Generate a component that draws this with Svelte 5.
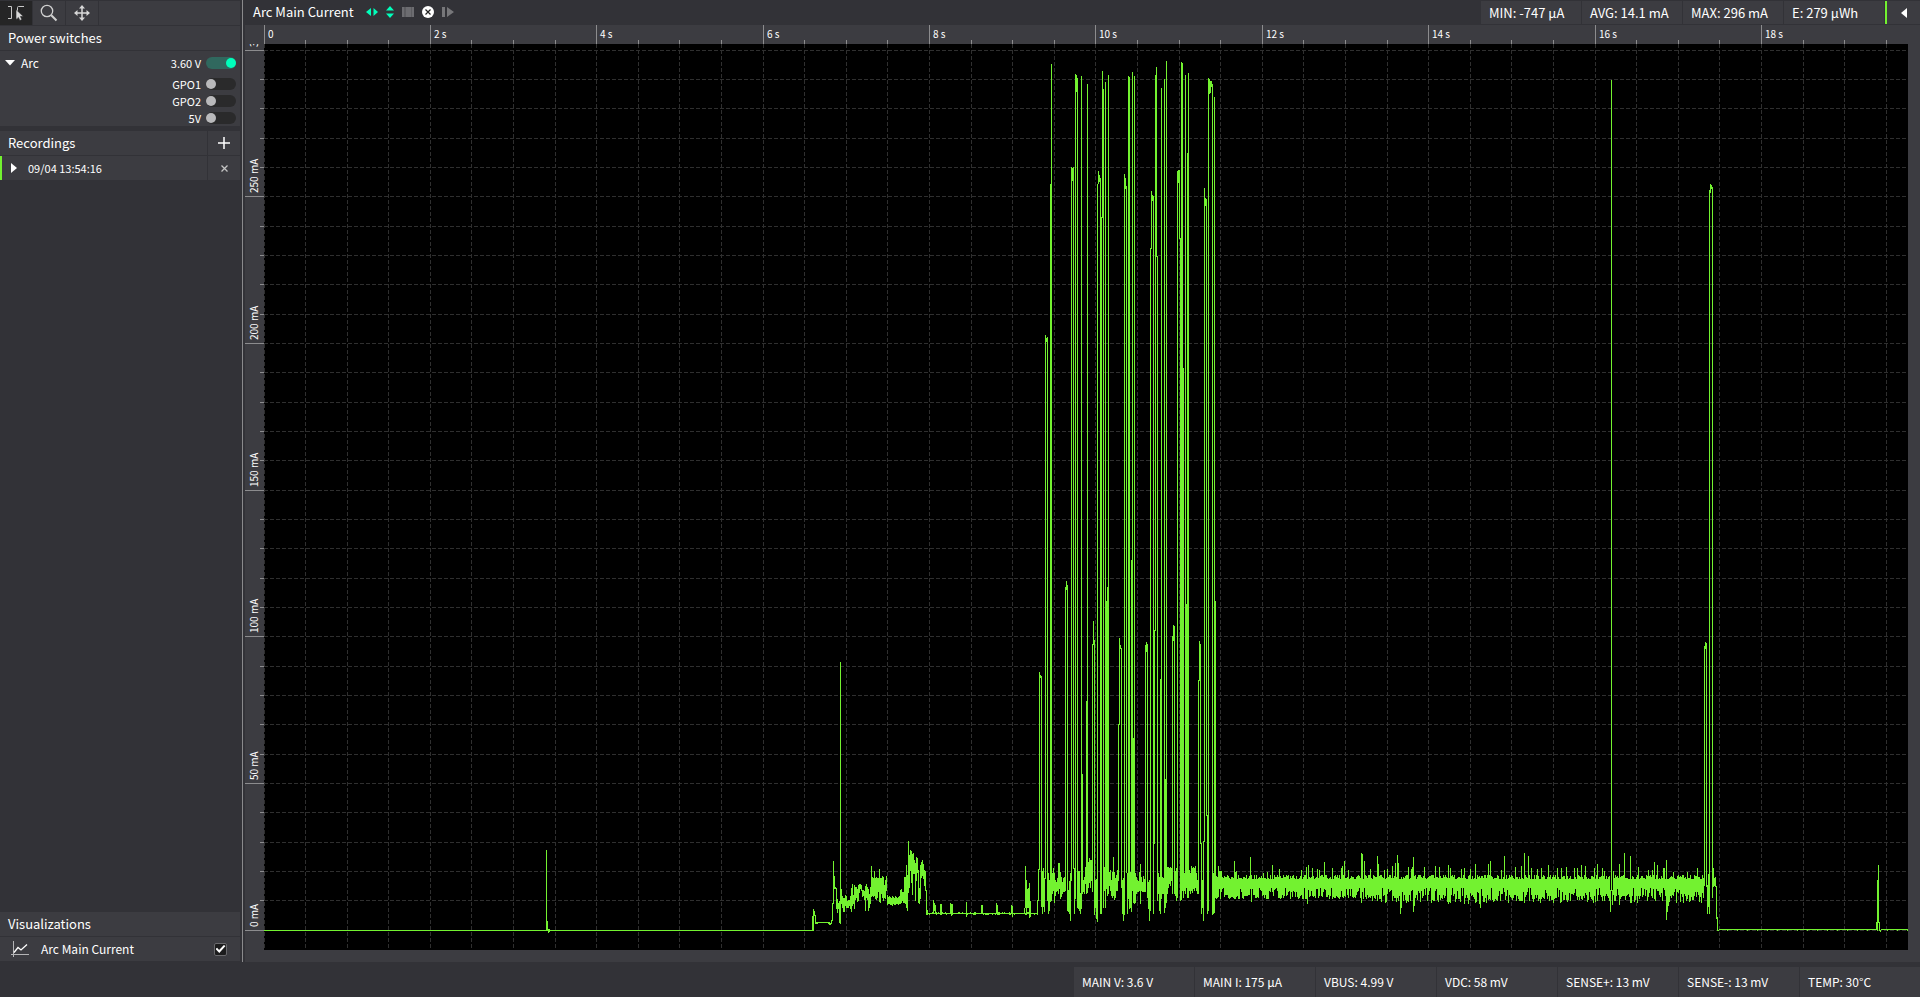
<script>
  const switches = [
    { label: '3.60 V', on: true, main: true },
    { label: 'GPO1', on: false },
    { label: 'GPO2', on: false },
    { label: '5V', on: false }
  ]

  const stats = ['MIN: -747 μA', 'AVG: 14.1 mA', 'MAX: 296 mA', 'E: 279 μWh']

  const readings = [
    'MAIN V: 3.6 V',
    'MAIN I: 175 μA',
    'VBUS: 4.99 V',
    'VDC: 58 mV',
    'SENSE+: 13 mV',
    'SENSE-: 13 mV',
    'TEMP: 30°C'
  ]

  // size of the canvas the capture was decimated for, and its origin
  const capture = { x: 264, y: 44, w: 1644, h: 906 }
  const secondsShown = 1644 / 83.19
  const topMa = 886 / 2.9333
  const spanMa = 906 / 2.9333

  let plotW = $state(capture.w)
  let plotH = $state(capture.h)

  const toX = (s) => Math.floor((s / secondsShown) * plotW + 0.01)
  const toY = (ma) => Math.floor(((topMa - ma) / spanMa) * plotH + 0.01)

  const xTicks = Array.from({ length: 40 }, (_, i) => i / 2)
  const yTicks = Array.from({ length: 31 }, (_, i) => i * 10)

  let seed = 7
  const rand = () => {
    seed = (seed * 16807) % 2147483647
    return seed / 2147483647
  }

  // runs of [first column, [min, max], [min, max], ...]
  const runs = [
    [546, [850, 930], [921, 930], [929, 932], [929, 931]],
    [812, [916, 930], [909, 930], [911, 915], [915, 923], [922, 923], [923, 923]],
    [828, [923, 923], [922, 924], [923, 924], [920, 923], [903, 920], [861, 903], [876, 888], [887, 888], [888, 908], [899, 912], [903, 908], [901, 922], [662, 923], [889, 903],
      [896, 907], [898, 911], [898, 911], [895, 905], [896, 907], [901, 907], [900, 907], [900, 905], [896, 908], [888, 911], [884, 905], [895, 903], [885, 908], [887, 899], [887, 897], [889, 901], [885, 900], [884, 892], [884, 888], [885, 890], [890, 896], [890, 895], [891, 899], [886, 910], [884, 897], [887, 899], [889, 910], [894, 907], [887, 903],
      [866, 896], [877, 895], [878, 896], [871, 895], [878, 898], [877, 899], [878, 897], [878, 891], [869, 901], [878, 902], [878, 893], [876, 897], [877, 900], [885, 897], [880, 898], [876, 890], [895, 904], [897, 903], [896, 903], [897, 904], [898, 904], [896, 905], [897, 903], [898, 904], [896, 904], [897, 903], [898, 903], [897, 904], [896, 903],
      [890, 903], [889, 902], [892, 900], [892, 902], [877, 902], [877, 903], [865, 907], [875, 910], [841, 892], [855, 887], [850, 870], [851, 882], [854, 894], [853, 873], [860, 873], [863, 900], [857, 880], [858, 872], [870, 902], [888, 903], [865, 898], [862, 877], [860, 875], [864, 878], [870, 885], [871, 890], [890, 913], [910, 914]],
    [933, [900, 913], [903, 910], [905, 912]],
    [940, [904, 914], [904, 914]],
    [950, [903, 912], [904, 915], [904, 913]],
    [966, [902, 916]],
    [981, [905, 913], [905, 913]],
    [996, [903, 913], [905, 914]],
    [1011, [905, 913], [906, 916]],
    [1024, [908, 913], [866, 907], [880, 913], [889, 907], [888, 907], [883, 917], [901, 916]],
    [1037, [900, 914], [869, 900], [672, 869], [675, 677], [676, 906], [871, 913], [868, 906], [878, 911], [335, 878], [338, 341], [337, 900], [873, 913], [880, 910], [184, 901], [64, 900], [873, 893], [868, 890], [873, 902], [880, 895], [882, 891], [878, 890], [863, 893], [863, 888], [872, 898], [877, 896], [882, 893], [878, 891], [877, 891],
      [587, 890], [581, 589], [585, 910], [890, 911], [881, 913], [873, 920], [167, 880], [168, 180], [167, 868], [868, 913], [74, 898], [75, 91], [78, 907], [871, 908], [871, 910], [893, 913], [76, 908], [774, 893], [880, 891], [877, 893], [867, 883], [701, 893], [84, 892], [862, 887], [858, 882], [860, 887], [860, 880],
      [644, 891], [621, 644], [640, 914], [880, 907], [879, 918], [184, 921], [171, 183], [175, 181], [178, 913], [217, 913], [71, 217], [89, 907], [867, 890], [82, 907], [601, 888], [587, 895], [75, 893], [872, 885], [870, 890], [880, 895], [872, 897], [857, 895], [872, 899], [878, 897], [875, 890], [870, 890],
      [724, 880], [638, 724], [645, 648], [648, 887], [880, 913], [878, 920], [174, 914], [178, 188], [186, 872], [873, 913], [76, 898], [77, 908], [872, 907], [560, 911], [72, 890], [738, 902], [76, 903], [873, 902], [877, 893], [880, 891], [881, 891], [872, 890], [864, 903], [877, 890], [882, 891], [876, 891], [879, 891],
      [645, 891], [642, 651], [644, 897], [882, 908], [880, 920], [248, 910], [191, 248], [195, 200], [196, 913], [630, 843], [75, 630], [67, 256], [256, 900], [873, 893], [877, 910], [679, 913], [88, 898], [877, 893], [878, 893], [79, 912], [779, 907], [61, 902], [867, 893], [867, 887], [868, 883], [867, 885], [868, 880],
      [636, 893], [625, 640], [626, 893], [871, 895], [868, 900], [171, 897], [170, 182], [170, 238], [238, 900], [62, 899], [63, 890], [368, 897], [873, 890], [75, 893], [604, 887], [153, 897], [73, 897], [870, 890], [873, 893], [866, 890], [868, 892], [867, 888], [868, 890], [866, 887], [873, 890], [880, 893],
      [680, 893], [641, 680], [644, 843], [843, 913], [880, 907], [841, 920], [188, 841], [198, 205], [199, 815], [815, 913], [78, 910], [79, 93], [81, 92], [81, 86], [84, 914], [873, 913], [97, 912], [601, 897]],
    [1704, [646, 885], [642, 648], [643, 886], [885, 913], [874, 906], [190, 913], [184, 192], [185, 188], [187, 897], [868, 886], [878, 885], [877, 886], [886, 918], [917, 930], [930, 930]],
    [1876, [922, 929], [880, 930], [865, 922], [922, 930], [930, 931]]
  ]

  // tallest peaks and dips of the noisy idle load
  const peaks = {
    1218: 866, 1219: 871, 1220: 871, 1221: 871, 1234: 861, 1235: 872, 1236: 871, 1250: 857, 1263: 873, 1267: 872, 1272: 865, 1279: 869,
    1301: 870, 1306: 867, 1308: 865, 1312: 868, 1317: 869, 1319: 870, 1324: 862, 1332: 868, 1341: 868, 1342: 866, 1344: 861, 1348: 870,
    1361: 853, 1362: 854, 1364: 861, 1370: 869, 1377: 856, 1378: 864, 1384: 870, 1387: 869, 1392: 866, 1395: 863, 1397: 855, 1398: 863,
    1408: 867, 1411: 869, 1412: 867, 1413: 857, 1424: 867, 1435: 866, 1439: 867, 1448: 865, 1450: 868, 1461: 869, 1464: 868, 1470: 869, 1475: 864,
    1488: 864, 1490: 861, 1501: 870, 1504: 856, 1515: 867, 1521: 866, 1524: 853, 1528: 856, 1531: 868, 1537: 869, 1541: 868, 1548: 865, 1557: 868, 1561: 868,
    1566: 867, 1574: 868, 1577: 868, 1581: 865, 1585: 866, 1594: 868, 1597: 864, 1602: 868, 1604: 871, 1613: 871, 1619: 864, 1624: 853, 1630: 856,
    1638: 867, 1648: 870, 1652: 870, 1654: 862, 1657: 865, 1663: 868, 1664: 868, 1666: 860, 1673: 872, 1687: 872, 1697: 868
  }
  const dips = {
    1251: 901, 1307: 903, 1361: 902, 1377: 900, 1400: 913, 1401: 907, 1413: 911, 1414: 905, 1448: 903, 1464: 903, 1468: 903, 1479: 903,
    1480: 907, 1610: 911, 1611: 904, 1619: 904, 1666: 919, 1667: 911, 1668: 905, 1683: 902, 1701: 902
  }

  const columns = []
  const flat = (from, to, y) => {
    for (let x = from; x <= to; x++) columns.push([x, y, y])
  }

  flat(264, 545, 930)
  flat(550, 811, 930)
  flat(816, 828, 922)
  for (let x = 926; x < 1037; x++) columns.push([x, rand() > 0.8 ? 912 : 913, rand() > 0.75 ? 914 : 913])
  for (let x = 1216; x < 1704; x++) {
    const wide = x > 1370
    const top = peaks[x] ?? 875 + Math.floor(rand() * 5)
    const low = rand() > 0.28
    const bottom = dips[x] ?? (low ? 894 : 887) + Math.floor(rand() * (wide ? 9 : 5))
    if (x === 1610) columns.push([x, 890, 911])
    else if (x === 1611) columns.push([x, 80, 890])
    else if (x === 1612) columns.push([x, 890, 904])
    else columns.push([x, top, bottom])
  }
  flat(1719, 1875, 929)
  flat(1881, 1907, 929)
  for (let x = 1727; x < 1908; x += 10) columns.push([x, 929, 930])
  for (const [start, ...values] of runs) {
    values.forEach(([top, bottom], i) => columns.push([start + i, top, bottom]))
  }

  const trace = columns
    .map(([x, top, bottom]) => `M${x - capture.x} ${top - capture.y}h1v${bottom - top + 1}h-1z`)
    .join('')
</script>

<div class="app">
  <div class="workspace">
    <aside class="sidebar">
      <div class="toolbar">
        <button class="tool active" aria-label="Select">
          <svg width="18" height="16" viewBox="0 0 18 16">
            <path d="M1 1.500h3.500v12H1M10.500 13.500V2.500q0-1 1-1H17" fill="none" stroke="#c8c8c8" />
            <path d="M9 4.500v10l2.400-2 1.500 3 2-1-1.500-3h3z" fill="#d8d8d8" stroke="#252526" stroke-width=".6" />
          </svg>
        </button>
        <button class="tool" aria-label="Zoom">
          <svg width="18" height="18" viewBox="0 0 18 18" fill="none" stroke="#d0d0d0">
            <circle cx="7" cy="7" r="5.700" stroke-width="1.300" />
            <path d="M11.300 11.300l5.200 5.200" stroke-width="2" />
          </svg>
        </button>
        <button class="tool" aria-label="Pan">
          <svg width="16" height="16" viewBox="0 0 16 16">
            <path d="M8 2v12M2 8h12" stroke="#d8d8d8" stroke-width="1.500" />
            <path d="M8 0l3 3.500H5zM8 16l3-3.500H5zM0 8l3.500-3v6zM16 8l-3.500-3v6z" fill="#d8d8d8" />
          </svg>
        </button>
        <div class="fill"></div>
      </div>

      <h2>Power switches</h2>
      <div class="supply">
        <button class="expander">
          <svg width="10" height="6" viewBox="0 0 10 6"><path d="M0 0h10L5 5.500z" fill="#fff" /></svg>
          Arc
        </button>
        <div class="switches">
          {#each switches as item}
            <label class:main={item.main}>
              {item.label}
              <input type="checkbox" role="switch" class="switch" bind:checked={item.on} />
            </label>
          {/each}
        </div>
      </div>

      <div class="recordings">
        <div class="row">
          <h2>Recordings</h2>
          <button class="side" aria-label="New recording">
            <svg width="12" height="12" viewBox="0 0 12 12"><path d="M6 0v12M0 6h12" stroke="#fff" stroke-width="1.500" /></svg>
          </button>
        </div>
        <div class="row">
          <button class="recording">
            <svg width="6" height="10" viewBox="0 0 6 10"><path d="M0 0l6 5-6 5z" fill="#fff" /></svg>
            09/04 13:54:16
          </button>
          <button class="side" aria-label="Delete recording">
            <svg width="7" height="7" viewBox="0 0 7 7"><path d="M.5.500l6 6M6.500.500l-6 6" stroke="#c4c4c4" stroke-width="1.300" /></svg>
          </button>
        </div>
      </div>

      <div class="visualizations">
        <h2>Visualizations</h2>
        <label class="visual">
          <svg width="18" height="16" viewBox="0 0 18 16" fill="none">
            <path d="M2.500 0v16M0 13.500h18" stroke="#b4b4b6" />
            <path d="M3 11.500l4-5 3 2.500 6-5.500" stroke="#fff" stroke-width="1.300" />
          </svg>
          <span>Arc Main Current</span>
          <input type="checkbox" class="check" checked />
        </label>
      </div>
    </aside>

    <main>
      <header>
        <h1>Arc Main Current</h1>
        <button aria-label="Fit time">
          <svg width="12" height="8" viewBox="0 0 12 8" fill="#00ffbb"><path d="M5 0v8L0 4zM7.500 0v8l4.500-4z" /></svg>
        </button>
        <button aria-label="Fit range">
          <svg width="8" height="12" viewBox="0 0 8 12" fill="#00ffbb"><path d="M0 4.500h8L4 0zM0 7.500h8L4 12z" /></svg>
        </button>
        <button aria-label="Columns">
          <svg width="12" height="10" viewBox="0 0 12 10"><path d="M0 0h12v10H0z" fill="#5c5c60" /><path d="M0 0h2v10H0zM4 0h5v10H4zM10 0h2v10h-2z" fill="#6c6c70" /></svg>
        </button>
        <button aria-label="Clear">
          <svg width="12" height="12" viewBox="0 0 12 12"><circle cx="6" cy="6" r="6" fill="#fff" /><path d="M3.500 3.500l5 5M8.500 3.500l-5 5" stroke="#222" stroke-width="1.200" /></svg>
        </button>
        <button aria-label="Follow">
          <svg width="12" height="10" viewBox="0 0 12 10" fill="#77777a"><path d="M0 0h3v10H0zM5 0l7 5-7 5z" /></svg>
        </button>
        <div class="stats">
          {#each stats as stat}
            <span>{stat}</span>
          {/each}
          <button class="collapse" aria-label="Collapse">
            <svg width="6" height="10" viewBox="0 0 6 10"><path d="M6 0v10L0 5z" fill="#fff" /></svg>
          </button>
        </div>
      </header>

      <div class="chart">
        <svg class="x-axis" width="100%" height="19">
          {#each xTicks as s}
            {#if toX(s) < plotW}
              <line x1={toX(s) + 0.5} x2={toX(s) + 0.5} y1={s % 2 ? 15 : 0} y2="19" />
              {#if s % 2 === 0}
                <text x={toX(s) + 4} y="13">{s === 0 ? '0' : `${s} s`}</text>
              {/if}
            {/if}
          {/each}
        </svg>
        <svg class="y-axis" width="19" height="100%">
          {#each yTicks as ma}
            <line x1={ma % 50 ? 15 : 0} x2="19" y1={toY(ma) + 0.5} y2={toY(ma) + 0.5} />
            {#if ma % 50 === 0}
              <text transform="translate(13 {toY(ma) - 3}) rotate(-90)">{ma} mA</text>
            {/if}
          {/each}
        </svg>
        <div class="plot" bind:clientWidth={plotW} bind:clientHeight={plotH}>
          <svg width="100%" height="100%">
            <g class="grid">
              {#each xTicks as s}
                <line x1={toX(s) + 0.5} x2={toX(s) + 0.5} y1="0" y2={plotH} />
              {/each}
              {#each yTicks as ma}
                <line x1="0" x2={plotW} y1={toY(ma) + 0.5} y2={toY(ma) + 0.5} />
              {/each}
            </g>
            <path class="trace" d={trace} transform="scale({plotW / capture.w} {plotH / capture.h})" />
          </svg>
        </div>
      </div>
    </main>
  </div>

  <footer>
    {#each readings as reading}
      <span>{reading}</span>
    {/each}
  </footer>
</div>

<style>
  :global(body) {
    background: #323237;
  }

  .app {
    display: flex;
    flex-direction: column;
    height: 100vh;
    overflow: hidden;
    color: #fff;
    font-family: 'Noto Sans CJK SC', 'Noto Sans', sans-serif;
    font-size: 12px;
    line-height: 20px;
  }

  .workspace {
    display: flex;
    flex: 1;
    min-height: 0;
  }

  h1,
  h2 {
    margin: 0;
    font-size: 13px;
    font-weight: 400;
  }

  h2 {
    height: 24px;
    padding-left: 8px;
    line-height: 24px;
    background: #3c3c41;
  }

  button {
    display: flex;
    align-items: center;
    margin: 0;
    padding: 0;
    border: 0;
    background: none;
    color: inherit;
    font: inherit;
  }

  svg {
    display: block;
    flex: none;
  }

  .sidebar {
    display: flex;
    flex-direction: column;
    width: 240px;
    padding: 1px 2px 1px 0;
    border-right: 1px solid #8a8a8c;
  }

  .toolbar {
    display: flex;
    gap: 1px;
    height: 24px;
    margin-bottom: 1px;
  }

  .tool {
    justify-content: center;
    width: 32px;
    background: #3c3c41;
  }

  .tool.active {
    background: #252526;
  }

  .fill {
    flex: 1;
    background: #3c3c41;
  }

  .supply {
    display: flex;
    justify-content: space-between;
    height: 75px;
    margin-top: 1px;
    padding: 0 4px 0 5px;
    background: #3c3c41;
  }

  .expander {
    gap: 6px;
    height: 24px;
  }

  .switches label {
    display: flex;
    align-items: center;
    justify-content: flex-end;
    gap: 5px;
    height: 17px;
    font-size: 11px;
  }

  .switches .main {
    height: 24px;
  }

  .switch {
    appearance: none;
    width: 30px;
    height: 12px;
    margin: 0;
    padding: 1px 0;
    border-radius: 6px;
    background: #2a2a2b;
  }

  .switch::before {
    content: '';
    display: block;
    width: 10px;
    height: 10px;
    border-radius: 5px;
    background: #b9b9bb;
  }

  .switch:checked {
    background: #30685e;
  }

  .switch:checked::before {
    margin-left: auto;
    background: #00ffbb;
  }

  .recordings {
    display: flex;
    flex-direction: column;
    gap: 1px;
    margin-top: 5px;
  }

  .row {
    display: flex;
    gap: 1px;
    height: 24px;
  }

  .row h2,
  .recording {
    flex: 1;
  }

  .side {
    justify-content: center;
    width: 32px;
    background: #3c3c41;
  }

  .recording {
    gap: 11px;
    padding-left: 9px;
    border-left: 2px solid #73f230;
    background: #3c3c41;
    font-size: 11px;
  }

  .visualizations {
    margin-top: auto;
  }

  .visual {
    display: flex;
    align-items: center;
    gap: 12px;
    height: 24px;
    margin-top: 1px;
    padding: 0 13px 0 11px;
    background: #3c3c41;
  }

  .visual span {
    flex: 1;
  }

  .check {
    appearance: none;
    display: grid;
    place-items: center;
    width: 13px;
    height: 13px;
    margin: 0;
    border: 1px solid #69696c;
    border-radius: 2px;
    background: #1c1c1d;
  }

  .check:checked::before {
    content: '';
    width: 10px;
    height: 8px;
    background: #fff;
    clip-path: polygon(0 50%, 16% 34%, 36% 62%, 84% 0, 100% 14%, 38% 100%);
  }

  main {
    display: flex;
    flex: 1;
    flex-direction: column;
    min-width: 0;
    padding-left: 2px;
  }

  header {
    display: flex;
    align-items: center;
    gap: 8px;
    height: 24px;
    padding: 0 0 1px 8px;
  }

  h1 {
    margin-right: 4px;
  }

  .stats {
    display: flex;
    align-self: flex-end;
    gap: 1px;
    height: 23px;
    margin-left: auto;
    font-size: 13px;
    line-height: 24px;
  }

  .stats span {
    width: 92px;
    padding-left: 8px;
    background: #3c3c41;
  }

  .collapse {
    justify-content: center;
    width: 35px;
    border-left: 2px solid #73f230;
    background: #3c3c41;
  }

  .chart {
    display: grid;
    flex: 1;
    grid-template-columns: 19px 1fr;
    grid-template-rows: 19px 1fr;
    min-height: 0;
    padding: 0 12px 12px 0;
    background: #3c3c41;
  }

  .x-axis {
    grid-column: 2;
  }

  .x-axis line,
  .y-axis line {
    stroke: #8c8c8e;
  }

  .x-axis text,
  .y-axis text {
    fill: #fff;
    font-size: 10px;
  }

  .plot {
    min-width: 0;
    min-height: 0;
    overflow: hidden;
    background: #000;
  }

  .grid line {
    stroke: #2f2f2f;
    stroke-dasharray: 4 2;
  }

  .trace {
    fill: #73f230;
    shape-rendering: crispEdges;
  }

  footer {
    display: flex;
    gap: 1px;
    justify-content: flex-end;
    height: 30px;
    margin-top: 5px;
    line-height: 30px;
  }

  footer span {
    width: 112px;
    padding-left: 8px;
    background: #3c3c41;
  }
</style>
